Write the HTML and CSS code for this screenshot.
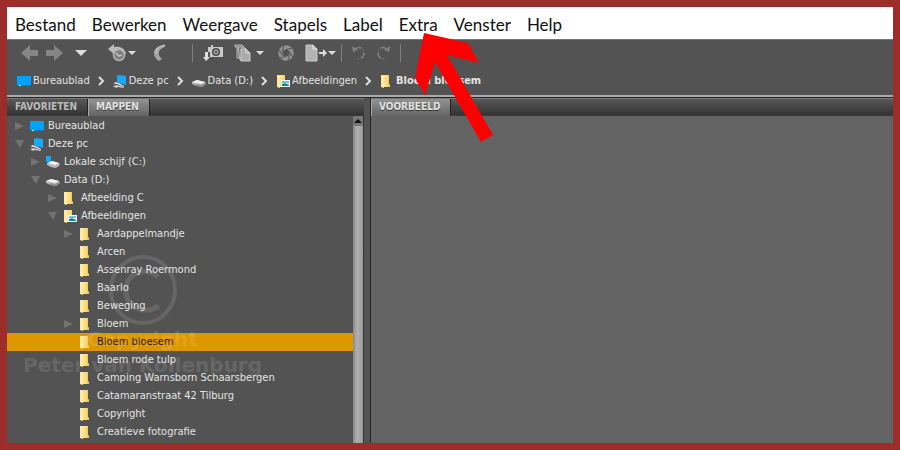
FILE: index.html
```html
<!DOCTYPE html>
<html lang="nl">
<head>
<meta charset="utf-8">
<title>Bloem bloesem</title>
<link rel="stylesheet" href="styles.css">
</head>
<body>
<svg class="defs" aria-hidden="true">
  <defs>
    <linearGradient id="gold"><stop offset="0" stop-color="#ffe9a0"/><stop offset="1" stop-color="#f9d36a"/></linearGradient>
    <symbol id="desktop" viewBox="0 0 14 14"><path d="M0 2h14v9H0z" fill="#00a2ff"/><path d="M0 11h14v1H0z" fill="#0879c8"/><path d="M2 11h2v1H2z" fill="#d6efff"/></symbol>
    <symbol id="pc" viewBox="0 0 14 14"><path d="M4 1l2 1 1-2 1 2 2-1 1 1 2 0v9l-9-3z" fill="#16aaff"/><path d="M2 8l4 1 5 3v1l-7-3H1z" fill="#d8dddf"/><path d="M0 12l4-1 3 1 4 1-1 1-5-1-2 1z" fill="#c8cdd0"/></symbol>
    <symbol id="drive" viewBox="0 0 14 14"><path d="M0 8l5-2 8 2 1 2-4 3-5-1-5-2z" fill="#b9b9b9"/><path d="M0 8l5-2 8 2-4 2z" fill="#f2f2f2"/><path d="M4 10l5 1 5-2v1l-4 3-5-1z" fill="#8c8c8c"/></symbol>
    <symbol id="system" viewBox="0 0 14 14"><path d="M0 1h5v6H0z" fill="#12aaff"/><path d="M1 8l5-2 7 2 1 2-4 3-5-1-4-2z" fill="#b9b9b9"/><path d="M2 8l4-2 7 2-4 2z" fill="#f4f4f4"/></symbol>
    <symbol id="folder" viewBox="0 0 14 14"><path d="M1 1h8v9l1 1v2H4l-3-1z" fill="url(#gold)"/><path d="M1 1l3 1v12l-3-1z" fill="#ffeaa3"/><path d="M8 1h1v9l1 1v2H8z" fill="#f2cb60"/></symbol>
    <symbol id="pictures" viewBox="0 0 14 14"><path d="M1 1h8v12H4l-3-1z" fill="url(#gold)"/><path d="M1 1l3 1v12l-3-1z" fill="#ffeaa3"/><path d="M5 6h9v7H5z" fill="#eef8fc"/><path d="M6 7h7v2H6z" fill="#65c5ea"/><path d="M6 10l3-1 4 2v1H6z" fill="#277b98"/></symbol>
    <symbol id="right" viewBox="0 0 10 10"><path d="M0 1l9 4-9 4z" fill="#737373"/></symbol>
    <symbol id="down" viewBox="0 0 10 10"><path d="M0 1h9l-4 8z" fill="#737373"/></symbol>
    <symbol id="chevron" viewBox="0 0 7 10"><path d="M1 1l4 4-4 4" fill="none" stroke="#dedede" stroke-width="2"/></symbol>
  </defs>
</svg>
<main class="window">
  <nav class="menu" aria-label="Menu">
    <button>Bestand</button><button>Bewerken</button><button>Weergave</button><button>Stapels</button><button>Label</button><button>Extra</button><button>Venster</button><button>Help</button>
  </nav>
  <header class="bars">
    <div class="tools">
      <button aria-label="Vorige"><svg width="17" height="16"><path d="M0 8l9-8v5h8v6H9v5z" fill="#858585"/></svg></button>
      <button aria-label="Volgende"><svg width="17" height="16"><path d="M17 8L8 0v5H0v6h8v5z" fill="#858585"/></svg></button>
      <button aria-label="Bovenliggende mappen"><svg width="12" height="16"><path d="M0 5h12l-6 6z" fill="#dedede"/></svg></button>
      <button aria-label="Recent"><svg width="28" height="18"><path d="M0 5l6-5v3c6-1 11 1 12 7l-2 1c-2-4-5-5-10-4v3z" fill="#bbb"/><circle cx="11" cy="11" r="5.5" fill="#808080" stroke="#b5b5b5" stroke-width="1.5"/><path d="M8 9l3 3 3-1" fill="none" stroke="#ccc" stroke-width="1.3"/><path d="M20 7h8l-4 4z" fill="#ddd"/></svg></button>
      <button aria-label="Boemerang"><svg width="13" height="18"><path d="M11 1C4 1 0 5 0 9c0 4 3 7 5 8l3-2C5 12 4 10 5 8c1-3 3-4 6-5z" fill="#a5a5a5"/><path d="M11 1C5 2 2 5 2 9" fill="none" stroke="#ccc"/></svg></button>
      <span class="rule"></span>
      <button aria-label="Foto's ophalen"><svg width="20" height="18"><path d="M5 3h3V1h2v2h10v10H7V8H5z" fill="#c9c9c9"/><circle cx="13" cy="8" r="4" fill="#444"/><circle cx="13" cy="8" r="2" fill="none" stroke="#ddd"/><path d="M2 8h3v5h2l-4 4-3-4h2z" fill="#e0e0e0"/></svg></button>
      <button aria-label="Verfijnen"><svg width="30" height="18"><path d="M1 1h7l3 3v10H3V3H1zM4 3h6l3 3v10H6z" fill="#777" stroke="#bbb"/><path d="M7 5h5l4 4v8H7z" fill="#aaa" stroke="#ccc"/><path d="M12 5v4h4" fill="none" stroke="#ddd"/><path d="M22 7h8l-4 4z" fill="#ddd"/></svg></button>
      <button aria-label="Openen in Camera Raw"><svg width="16" height="18"><circle cx="8" cy="9" r="5.5" fill="none" stroke="#929292" stroke-width="4.5"/><path d="M6 1l-2 7M14 4L7 6M15 13l-4-6M10 17l2-7M2 14l7-2M1 6l4 6" fill="none" stroke="#535353"/></svg></button>
      <button aria-label="Uitvoer"><svg width="31" height="18"><path d="M1 1h7l4 4v12H1z" fill="#b3b3b3" stroke="#c9c9c9"/><path d="M8 1v4h4" fill="none" stroke="#eee"/><path d="M14 8h4V5l4 4-4 4v-3h-4z" fill="#ddd"/><path d="M23 7h8l-4 4z" fill="#ddd"/></svg></button>
      <span class="rule"></span>
      <button aria-label="Linksom draaien"><svg width="14" height="18"><path d="M0 2l1 6 5-2z" fill="#818181"/><path d="M3 5c4-3 9-1 9 4 0 4-3 6-7 6" fill="none" stroke="#818181" stroke-width="1.5" stroke-dasharray="7 2 1 2"/></svg></button>
      <button aria-label="Rechtsom draaien"><svg width="14" height="18"><path d="M14 2l-1 6-5-2z" fill="#818181"/><path d="M11 5C7 2 2 4 2 9c0 4 3 6 7 6" fill="none" stroke="#818181" stroke-width="1.5" stroke-dasharray="7 2 1 2"/></svg></button>
      <span class="rule"></span>
    </div>
    <nav class="path" aria-label="Pad">
      <a href="#"><svg class="icon"><use href="#desktop"/></svg>Bureaublad</a><svg class="chev"><use href="#chevron"/></svg>
      <a href="#"><svg class="icon"><use href="#pc"/></svg>Deze pc</a><svg class="chev"><use href="#chevron"/></svg>
      <a href="#"><svg class="icon"><use href="#drive"/></svg>Data (D:)</a><svg class="chev"><use href="#chevron"/></svg>
      <a href="#"><svg class="icon"><use href="#pictures"/></svg>Afbeeldingen</a><svg class="chev"><use href="#chevron"/></svg>
      <a href="#" class="here"><svg class="icon"><use href="#folder"/></svg>Bloem bloesem</a>
    </nav>
  </header>
  <div class="panels">
    <section class="side">
      <div class="tabs"><button>FAVORIETEN</button><button class="on">MAPPEN</button></div>
      <div class="body">
        <ul class="tree">
          <li class="l0"><svg class="tw"><use href="#right"/></svg><button><svg class="icon"><use href="#desktop"/></svg>Bureaublad</button></li>
          <li class="l0"><svg class="tw"><use href="#down"/></svg><button><svg class="icon"><use href="#pc"/></svg>Deze pc</button></li>
          <li class="l1"><svg class="tw"><use href="#right"/></svg><button><svg class="icon"><use href="#system"/></svg>Lokale schijf (C:)</button></li>
          <li class="l1"><svg class="tw"><use href="#down"/></svg><button><svg class="icon"><use href="#drive"/></svg>Data (D:)</button></li>
          <li class="l2"><svg class="tw"><use href="#right"/></svg><button><svg class="icon"><use href="#folder"/></svg>Afbeelding C</button></li>
          <li class="l2"><svg class="tw"><use href="#down"/></svg><button><svg class="icon"><use href="#pictures"/></svg>Afbeeldingen</button></li>
          <li class="l3"><svg class="tw"><use href="#right"/></svg><button><svg class="icon"><use href="#folder"/></svg>Aardappelmandje</button></li>
          <li class="l3"><span class="tw"></span><button><svg class="icon"><use href="#folder"/></svg>Arcen</button></li>
          <li class="l3"><span class="tw"></span><button><svg class="icon"><use href="#folder"/></svg>Assenray Roermond</button></li>
          <li class="l3"><span class="tw"></span><button><svg class="icon"><use href="#folder"/></svg>Baarlo</button></li>
          <li class="l3"><span class="tw"></span><button><svg class="icon"><use href="#folder"/></svg>Beweging</button></li>
          <li class="l3"><svg class="tw"><use href="#right"/></svg><button><svg class="icon"><use href="#folder"/></svg>Bloem</button></li>
          <li class="l3 sel"><span class="tw"></span><button><svg class="icon"><use href="#folder"/></svg>Bloem bloesem</button></li>
          <li class="l3"><span class="tw"></span><button><svg class="icon"><use href="#folder"/></svg>Bloem rode tulp</button></li>
          <li class="l3"><span class="tw"></span><button><svg class="icon"><use href="#folder"/></svg>Camping Warnsborn Schaarsbergen</button></li>
          <li class="l3"><span class="tw"></span><button><svg class="icon"><use href="#folder"/></svg>Catamaranstraat 42 Tilburg</button></li>
          <li class="l3"><span class="tw"></span><button><svg class="icon"><use href="#folder"/></svg>Copyright</button></li>
          <li class="l3"><span class="tw"></span><button><svg class="icon"><use href="#folder"/></svg>Creatieve fotografie</button></li>
        </ul>
        <div class="scroll"><button aria-label="Omhoog"><svg width="8" height="6"><path d="M0 5l4-4 4 4z" fill="#111"/></svg></button></div>
        <div class="mark">
          <svg width="70" height="72" viewBox="0 0 70 72"><ellipse cx="35" cy="36" rx="32" ry="33" fill="none" stroke="#fff" stroke-width="4"/><path d="M50 23C39 12 18 18 18 36s18 25 33 16" fill="none" stroke="#fff" stroke-width="5"/></svg>
          <span>Copyright</span><span>Peter van Kollenburg</span>
        </div>
      </div>
    </section>
    <section class="preview">
      <div class="tabs"><button class="on">VOORBEELD</button></div>
    </section>
  </div>
</main>
<svg class="pointer" width="80" height="110" viewBox="0 0 80 110" aria-hidden="true"><path d="M10 0l44 10 11 20-32-8 46 80-12 7-46-80-10 33-10-17z" fill="#f00"/></svg>
</body>
</html>
```
FILE: styles.css
```css
* { box-sizing: border-box; }
body {
  margin: 0;
  min-height: 100vh;
  padding: 7px;
  display: flex;
  background: #9c2d2a;
  font: 11px/18px "DejaVu Sans Condensed", "DejaVu Sans", sans-serif;
  color: #e4e4e4;
}
button {
  border: 0;
  padding: 0;
  background: none;
  font: inherit;
  color: inherit;
  text-align: left;
  white-space: nowrap;
}
svg { display: block; flex: none; }
.defs { position: absolute; width: 0; height: 0; }
.window { flex: 1; min-width: 0; display: flex; flex-direction: column; background: #535353; }
.menu {
  display: flex;
  gap: 16px;
  height: 32px;
  padding: 2px 8px 0;
  background: #fff;
  color: #111;
  font: 17px/32px Lato, "Noto Sans", sans-serif;
}
.bars { height: 58px; border-top: 1px solid #777; border-bottom: 2px solid #aaa; }
.tools {
  display: grid;
  grid-template-columns: 25px 29px 33px 46px 38px 11px 31px 44px 27px 36px 11px 24px 24px 1px;
  align-items: center;
  height: 26px;
  padding-left: 14px;
}
.rule { width: 1px; height: 18px; background: #808080; }
.path { display: flex; align-items: center; height: 30px; padding-left: 10px; }
.path a { display: flex; align-items: center; gap: 2px; color: inherit; text-decoration: none; white-space: nowrap; }
.path .here { font-weight: bold; }
.icon { width: 14px; height: 14px; }
.chev { width: 7px; height: 10px; margin: 0 8px; }
.panels { flex: 1; display: flex; border-top: 1px solid #282828; }
.side { flex: 0 0 357px; display: flex; flex-direction: column; }
.preview { flex: 1; margin-left: 6px; border-left: 1px solid #222; background: #636363; }
.tabs {
  display: flex;
  height: 18px;
  background: linear-gradient(#585858, #333);
  border-top: 1px solid #777;
  border-bottom: 1px solid #3a3a3a;
  font: bold 10px/15px "DejaVu Sans Condensed", "DejaVu Sans", sans-serif;
}
.tabs button { padding: 0 10px 2px 8px; border-right: 1px solid #222; color: #bbb; }
.tabs .on { padding-left: 7px; height: 17px; background: linear-gradient(#939393, #646464); color: #e4e4e4; border-left: 1px solid #aaa; text-shadow: 0 1px #333; }
.body { position: relative; flex: 1; display: flex; }
.tree { flex: 1; min-width: 0; margin: 0; padding: 1px 0 0; list-style: none; }
.tree li { display: flex; align-items: center; height: 18px; }
.tree button { display: flex; align-items: center; gap: 4px; line-height: 18px; }
.tw { width: 10px; height: 10px; margin-right: 5px; }
.l0 { padding-left: 8px; }
.l1 { padding-left: 24px; }
.l2 { padding-left: 41px; }
.l3 { padding-left: 57px; }
.tree .sel { background: #de9700; color: #1c1400; }
.scroll { width: 11px; background: linear-gradient(90deg, #888, #b0b0b0 40%, #9c9c9c); border-right: 1px solid #333; }
.scroll button { display: flex; align-items: center; justify-content: center; width: 10px; height: 10px; background: #777; }
.mark {
  position: absolute;
  left: 16px;
  top: 138px;
  display: flex;
  flex-direction: column;
  align-items: center;
  font: bold 20px/26px "DejaVu Sans", sans-serif;
  color: #fff;
  opacity: .11;
  pointer-events: none;
}
.pointer { position: absolute; left: 414px; top: 33px; pointer-events: none; }
```
